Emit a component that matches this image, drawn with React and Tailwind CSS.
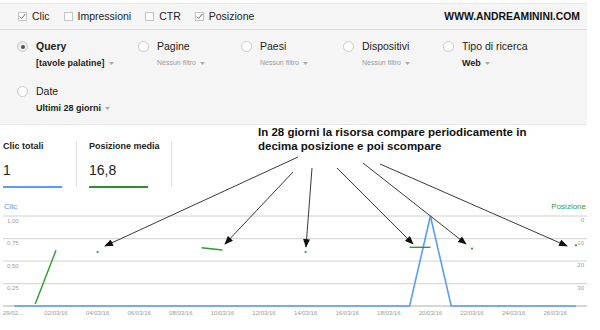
import React from 'react';

// day index -> x on the chart (29/02 = 0)
const dx = (d) => 14.4 + 20.8 * d;

const Checkbox = ({ label, checked }) => (
  <div className="flex items-center mr-[14px]">
    <span className="w-[9px] h-[9px] border border-[#c4c4c4] bg-white flex items-center justify-center">
      {checked && (
        <svg width="7" height="7" viewBox="0 0 7 7">
          <path d="M0.8 3.6 L2.6 5.4 L6.4 1" fill="none" stroke="#666" strokeWidth="1" />
        </svg>
      )}
    </span>
    <span className="ml-[5px] text-[10.5px] leading-[13px] text-[#222]">{label}</span>
  </div>
);

const Caret = () => (
  <svg width="5" height="3" viewBox="0 0 5 3" className="ml-[4px]">
    <path d="M0 0 L5 0 L2.5 3 z" fill="#aaa" />
  </svg>
);

const Filter = ({ label, value, strong, selected, w }) => (
  <div className={`flex items-start ${w}`}>
    <span
      className={`mt-[1px] w-[11px] h-[11px] rounded-full border border-[#cacaca] flex items-center justify-center ${
        selected ? 'bg-[#ececec]' : 'bg-white'
      }`}
    >
      {selected && <span className="w-[4px] h-[4px] rounded-full bg-[#555]" />}
    </span>
    <div className="ml-[8px] flex flex-col">
      <span className={`text-[10.5px] leading-[13px] text-[#222] ${selected ? 'font-bold' : ''}`}>{label}</span>
      <span className="mt-[5px] h-[10px] flex items-center">
        {strong ? (
          <span className="text-[9px] leading-[10px] font-bold text-[#222]">{value}</span>
        ) : (
          <span className="text-[7px] leading-[10px] text-[#9a9a9a]">{value}</span>
        )}
        <Caret />
      </span>
    </div>
  </div>
);

const Metric = ({ label, value, bar }) => (
  <div className="mt-[15px] flex flex-col">
    <span className="text-[9px] leading-[12px] font-bold text-[#222]">{label}</span>
    <span className="mt-[10px] text-[14px] leading-[16px] text-[#222]">{value}</span>
    <span className={`mt-[8px] w-[59px] h-[2px] ${bar}`} />
  </div>
);

const grid = [218, 240.7, 263, 285.7];
const leftTicks = [['1,00', 225], ['0,75', 247], ['0,50', 270], ['0,25', 292]];
const rightTicks = [['0', 224], ['10', 247], ['20', 269], ['30', 292]];
const dates = [2, 4, 6, 8, 10, 12, 14, 16, 18, 20, 22, 24, 26];

const arrows = [
  [298, 157, 105, 246],
  [293, 172, 225, 244],
  [312, 168, 306, 247],
  [337, 168, 413, 244],
  [363, 163, 466, 244],
  [380, 164, 567, 246],
];

const Chart = () => (
  <svg width="600" height="116" viewBox="0 214 600 116" className="block">
    {grid.map((y) => (
      <line key={y} x1="3" x2="587" y1={y} y2={y} stroke="#d0d0d0" strokeWidth="1" />
    ))}
    <line x1="3" x2="587" y1="308" y2="308" stroke="#c8c8c8" strokeWidth="1.5" />
    <g fontFamily="Liberation Sans, Arial, sans-serif" fontSize="6" fill="#9a9a9a">
      {leftTicks.map(([t, y]) => (
        <text key={t} x="7" y={y}>{t}</text>
      ))}
      {rightTicks.map(([t, y]) => (
        <text key={t} x="584" y={y} textAnchor="end">{t}</text>
      ))}
      <text x="3" y="316.5">29/02...</text>
      {dates.map((d) => (
        <text key={d} x={dx(d)} y="316.5" textAnchor="middle">
          {String(d).padStart(2, '0')}/03/16
        </text>
      ))}
    </g>
    {/* clic */}
    <polyline
      points={`${dx(0)},308 ${dx(19)},308 ${dx(20)},218 ${dx(21)},308 ${dx(27)},308`}
      fill="none"
      stroke="#5b9cf6"
      strokeWidth="1.6"
      strokeLinejoin="miter"
    />
    {/* posizione */}
    <g stroke="#2e9b33" strokeWidth="1.4" fill="#2e9b33">
      <line x1={dx(1)} y1="306" x2={dx(2)} y2="252.3" />
      <line x1={dx(9)} y1="249.7" x2={dx(10)} y2="252" />
      <line x1={dx(19)} y1="249.3" x2={dx(20)} y2="249.3" />
      <circle cx={dx(4)} cy="254" r="1.1" stroke="none" />
      <circle cx={dx(14)} cy="254" r="1.1" stroke="none" />
      <circle cx={dx(22)} cy="250.7" r="1.1" stroke="none" />
      <circle cx={dx(27)} cy="247.3" r="1.1" stroke="none" />
    </g>
  </svg>
);

export default function App() {
  return (
    <div className="relative w-[600px] h-[330px] overflow-hidden bg-white font-['Liberation_Sans',Arial,sans-serif]">
      {/* filter panel */}
      <div className="w-[587px] mt-[3px] bg-[#f5f5f5] border-t border-b border-[#e6e6e6]">
        <div className="h-[26px] flex items-center pl-[18px] pr-[7px] border-b border-[#dcdcdc]">
          <Checkbox label="Clic" checked />
          <Checkbox label="Impressioni" />
          <Checkbox label="CTR" />
          <Checkbox label="Posizione" checked />
          <span className="ml-auto text-[10.4px] font-bold text-[#111]">WWW.ANDREAMININI.COM</span>
        </div>
        <div className="pl-[17px] pt-[10px] pb-[11px] flex flex-col gap-y-[17px]">
          <div className="flex">
            <Filter w="w-[121px]" label="Query" value="[tavole palatine]" strong selected />
            <Filter w="w-[103px]" label="Pagine" value="Nessun filtro" />
            <Filter w="w-[102px]" label="Paesi" value="Nessun filtro" />
            <Filter w="w-[100px]" label="Dispositivi" value="Nessun filtro" />
            <Filter w="w-[120px]" label="Tipo di ricerca" value="Web" strong />
          </div>
          <div className="flex">
            <Filter w="w-[121px]" label="Date" value="Ultimi 28 giorni" strong />
          </div>
        </div>
      </div>

      {/* metrics + note */}
      <div className="flex items-start h-[76px]">
        <div className="w-[76px] pl-[3px]">
          <Metric label="Clic totali" value="1" bar="bg-[#5b9cf6]" />
        </div>
        <span className="mt-[16px] w-px h-[46px] bg-[#dedede]" />
        <div className="w-[94px] pl-[12px]">
          <Metric label="Posizione media" value="16,8" bar="bg-[#2f8f2f]" />
        </div>
        <span className="mt-[16px] w-px h-[46px] bg-[#dedede]" />
        <p className="ml-[86px] mt-0 text-[11.5px] leading-[14px] font-bold text-[#111] whitespace-nowrap">
          In 28 giorni la risorsa compare periodicamente in
          <br />
          decima posizione e poi scompare
        </p>
      </div>

      {/* chart */}
      <div className="h-[11px] flex justify-between pl-[4px] pr-[14px] text-[8px] leading-[11px]">
        <span className="text-[#5b9cf6]">Clic</span>
        <span className="text-[#3a9e3a]">Posizione</span>
      </div>
      <Chart />

      {/* arrows drawn over the page */}
      <svg className="absolute inset-0 pointer-events-none" width="600" height="330" viewBox="0 0 600 330">
        <defs>
          <marker id="ah" viewBox="0 0 10 8" refX="9" refY="4" markerWidth="9" markerHeight="7" orient="auto" markerUnits="userSpaceOnUse">
            <path d="M0 0 L10 4 L0 8 z" fill="#111" />
          </marker>
        </defs>
        {arrows.map(([x1, y1, x2, y2], i) => (
          <line key={i} x1={x1} y1={y1} x2={x2} y2={y2} stroke="#222" strokeWidth="0.9" markerEnd="url(#ah)" />
        ))}
      </svg>
    </div>
  );
}
